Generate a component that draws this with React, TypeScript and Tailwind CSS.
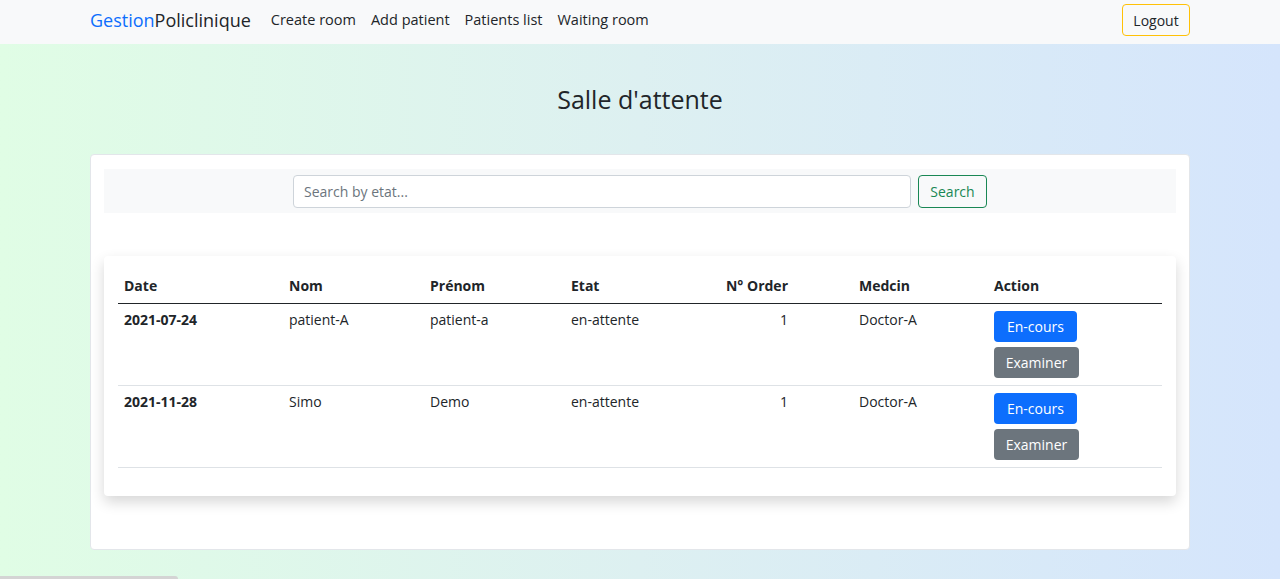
const rows = [
  { date: "2021-07-24", nom: "patient-A", prenom: "patient-a", etat: "en-attente", order: 1, medcin: "Doctor-A" },
  { date: "2021-11-28", nom: "Simo", prenom: "Demo", etat: "en-attente", order: 1, medcin: "Doctor-A" },
];

const navLinks = ["Create room", "Add patient", "Patients list", "Waiting room"];

export default function App() {
  return (
    <div
      className="relative min-h-[579px] overflow-hidden bg-gradient-to-r from-[#e0fde5] via-[#ddf0f1] to-[#d5e5fc] text-[#212529]"
      style={{ fontFamily: '"Open Sans", "Noto Sans", Arial, sans-serif' }}
    >
      {/* navbar */}
      <nav className="h-[44px] bg-[#f8f9fa]">
        <div className="mx-auto flex h-[40px] w-[1100px] items-center">
          <a className="text-[18px] leading-none">
            <span className="text-[#0d6efd]">Gestion</span>
            <span className="text-[#212529]">Policlinique</span>
          </a>
          <ul className="ml-[20px] flex items-center gap-[15px] text-[14.5px] text-[#212529]">
            {navLinks.map((l) => (
              <li key={l}>{l}</li>
            ))}
          </ul>
          <button className="ml-auto h-[32px] w-[68px] rounded-[4px] border border-[#ffc107] text-[14px] text-[#212529]">
            Logout
          </button>
        </div>
      </nav>

      <h3 className="mt-[40px] text-center text-[25px] leading-[30px] font-medium text-[#212529]">
        Salle d'attente
      </h3>

      {/* main card */}
      <div className="mx-auto mt-[40px] w-[1100px] rounded-[4px] border border-[#e3e6ea] bg-white px-[13px] pt-[14px] pb-[53px]">
        <div className="flex h-[44px] items-center justify-center gap-[7px] bg-[#f8f9fa]">
          <input
            placeholder="Search by etat..."
            className="h-[33px] w-[618px] rounded-[4px] border border-[#ced4da] bg-white px-[10px] text-[14px] placeholder:text-[#6c757d] outline-none"
          />
          <button className="h-[33px] w-[69px] rounded-[4px] border border-[#198754] text-[14px] text-[#198754]">
            Search
          </button>
        </div>

        <div className="mt-[43px] rounded-[4px] bg-white px-[14px] pt-[14px] pb-[28px] shadow-[0_6px_14px_rgba(0,0,0,0.16)]">
          <table className="w-full border-collapse text-left text-[14px]">
            <thead>
              <tr className="h-[33px] border-b border-[#212529]">
                <th className="w-[165px] px-[6px] pb-[1px] font-bold">Date</th>
                <th className="w-[141px] px-[6px] pb-[1px] font-bold">Nom</th>
                <th className="w-[141px] px-[6px] pb-[1px] font-bold">Prénom</th>
                <th className="w-[141px] px-[6px] pb-[1px] font-bold">Etat</th>
                <th className="w-[88px] px-[6px] pb-[1px] text-right font-bold">N° Order</th>
                <th className="w-[194px] pr-[6px] pb-[1px] pl-[65px] font-bold">Medcin</th>
                <th className="px-[6px] pb-[1px] font-bold">Action</th>
              </tr>
            </thead>
            <tbody>
              {rows.map((r) => (
                <tr key={r.date} className="border-b border-[#dee2e6] align-top">
                  <td className="px-[6px] pt-[6px] leading-[20px] font-bold">{r.date}</td>
                  <td className="px-[6px] pt-[6px] leading-[20px]">{r.nom}</td>
                  <td className="px-[6px] pt-[6px] leading-[20px]">{r.prenom}</td>
                  <td className="px-[6px] pt-[6px] leading-[20px]">{r.etat}</td>
                  <td className="px-[6px] pt-[6px] text-right leading-[20px]">{r.order}</td>
                  <td className="pt-[6px] pr-[6px] pl-[65px] leading-[20px]">{r.medcin}</td>
                  <td className="px-[6px] pt-[7px] pb-[7px]">
                    <div className="flex flex-col items-start gap-[5px]">
                      <button className="h-[31px] w-[83px] rounded-[4px] bg-[#0d6efd] text-[14px] text-white">
                        En-cours
                      </button>
                      <button className="h-[31px] w-[85px] rounded-[4px] bg-[#6c757d] text-[14px] text-white">
                        Examiner
                      </button>
                    </div>
                  </td>
                </tr>
              ))}
            </tbody>
          </table>
        </div>
      </div>

      {/* scrollbar thumb */}
      <div className="absolute bottom-0 left-0 h-[3px] w-[178px] rounded-tr-[3px] bg-[#d4d4d4]" />
    </div>
  );
}
